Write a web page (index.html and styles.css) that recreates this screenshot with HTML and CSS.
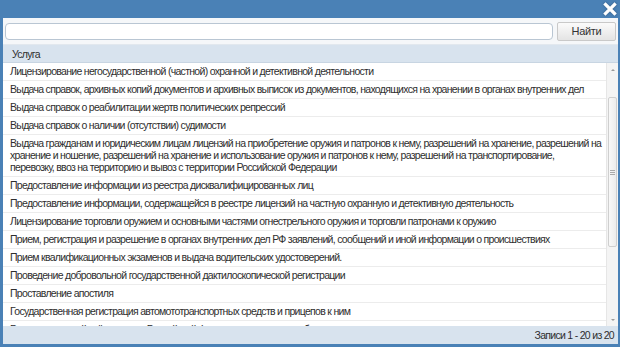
FILE: index.html
```html
<!DOCTYPE html>
<html lang="ru">
<head>
  <meta charset="UTF-8">
  <title>Услуги</title>
  <link rel="stylesheet" href="styles.css">
</head>
<body>
  <div class="window">
    <div class="titlebar">
      <span class="close" title="Закрыть">
        <svg width="14" height="14" viewBox="0 0 14 14">
          <path d="M2.5 2.5 L11.5 11.5 M11.5 2.5 L2.5 11.5" stroke="#fff" stroke-width="3.2" stroke-linecap="square"/>
        </svg>
      </span>
    </div>

    <div class="toolbar">
      <input type="text" class="search">
      <button class="find">Найти</button>
    </div>

    <div class="grid">
      <div class="grid-head">Услуга</div>
      <div class="grid-body">
        <ul class="rows">
          <li>Лицензирование негосударственной (частной) охранной и детективной деятельности</li>
          <li>Выдача справок, архивных копий документов и архивных выписок из документов, находящихся на хранении в органах внутренних дел</li>
          <li>Выдача справок о реабилитации жертв политических репрессий</li>
          <li>Выдача справок о наличии (отсутствии) судимости</li>
          <li>Выдача гражданам и юридическим лицам лицензий на приобретение оружия и патронов к нему, разрешений на хранение, разрешений на хранение и ношение, разрешений на хранение и использование оружия и патронов к нему, разрешений на транспортирование,<br>перевозку, ввоз на территорию и вывоз с территории Российской Федерации</li>
          <li>Предоставление информации из реестра дисквалифицированных лиц</li>
          <li>Предоставление информации, содержащейся в реестре лицензий на частную охранную и детективную деятельность</li>
          <li>Лицензирование торговли оружием и основными частями огнестрельного оружия и торговли патронами к оружию</li>
          <li>Прием, регистрация и разрешение в органах внутренних дел РФ заявлений, сообщений и иной информации о происшествиях</li>
          <li>Прием квалификационных экзаменов и выдача водительских удостоверений.</li>
          <li>Проведение добровольной государственной дактилоскопической регистрации</li>
          <li>Проставление апостиля</li>
          <li>Государственная регистрация автомототранспортных средств и прицепов к ним</li>
          <li>Регистрационный учёт граждан Российской Федерации по месту пребывания</li>
          <li>Выдача паспорта гражданина Российской Федерации</li>
        </ul>
        <div class="scrollbar">
          <span class="arrow up"></span>
          <div class="track">
            <div class="thumb"><span class="grip"></span></div>
          </div>
          <span class="arrow down"></span>
        </div>
      </div>
      <div class="grid-foot">Записи 1 - 20 из 20</div>
    </div>
  </div>
</body>
</html>
```

FILE: styles.css
```css
html, body {
  margin: 0;
  padding: 0;
}
body {
  font-family: "Liberation Sans", Arial, sans-serif;
  font-size: 10.5px;
  letter-spacing: -0.7px;
  color: #2e2e2e;
  background: #fff;
}
.window {
  width: 620px;
  height: 347px;
  box-sizing: border-box;
  border: solid #4a81b6;
  border-width: 0 2px 3px 3px;
  display: flex;
  flex-direction: column;
  overflow: hidden;
}
.titlebar {
  height: 18px;
  background: #4a81b6;
  display: flex;
  justify-content: flex-end;
  align-items: center;
}
.close {
  display: flex;
  margin-right: 1px;
  filter: drop-shadow(0 0 1px rgba(0,0,0,0.3));
}
.toolbar {
  height: 27px;
  background: #f5f7f9;
  display: flex;
  align-items: center;
  gap: 4px;
  padding: 0 2px 0 2px;
  border-bottom: 1px solid #e2e8ee;
  box-sizing: border-box;
}
.search {
  flex: 1;
  height: 17px;
  box-sizing: border-box;
  border: 1px solid #b9c6d3;
  border-radius: 4px;
  background: #fff;
  margin: 0;
}
.find {
  width: 59px;
  height: 19px;
  border: 1px solid #c9c9c9;
  border-radius: 2px;
  background: linear-gradient(#fbfbfb, #e4e4e4);
  font-family: inherit;
  font-size: 11px;
  letter-spacing: -0.3px;
  color: #333;
  padding: 0;
}
.grid {
  flex: 1;
  display: flex;
  flex-direction: column;
  min-height: 0;
}
.grid-head {
  height: 18px;
  line-height: 18px;
  background: #d8e3ee;
  padding-left: 9px;
  border-bottom: 1px solid #c8d5e2;
  box-sizing: border-box;
}
.grid-body {
  flex: 1;
  display: flex;
  min-height: 0;
}
.rows {
  flex: 1;
  list-style: none;
  margin: 0;
  padding: 0;
  overflow: hidden;
}
.rows li {
  padding: 2px 0 3px 7px;
  line-height: 12px;
  border-bottom: 1px solid #ececec;
}
.scrollbar {
  width: 11px;
  background: #f4f4f4;
  border-left: 1px solid #e6e6e6;
  display: flex;
  flex-direction: column;
}
.arrow {
  height: 13px;
  display: flex;
  justify-content: center;
  align-items: center;
}
.arrow::before {
  content: "";
  border-left: 2px solid transparent;
  border-right: 2px solid transparent;
}
.arrow.up::before {
  border-bottom: 2px solid #9a9a9a;
}
.arrow.down::before {
  border-top: 2px solid #9a9a9a;
}
.track {
  flex: 1;
  padding-top: 21px;
}
.thumb {
  height: 148px;
  margin: 0 1px;
  background: linear-gradient(90deg, #f8f8f8, #ececec);
  border: 1px solid #cfcfcf;
  border-radius: 2px;
  display: flex;
  justify-content: center;
  align-items: center;
}
.grip {
  width: 5px;
  height: 5px;
  border-top: 1px solid #aaa;
  border-bottom: 1px solid #aaa;
  box-sizing: border-box;
  background: linear-gradient(#aaa, #aaa) center / 100% 1px no-repeat;
}
.grid-foot {
  height: 18px;
  line-height: 18px;
  background: #d8e3ee;
  text-align: right;
  padding-right: 4px;
}
```
